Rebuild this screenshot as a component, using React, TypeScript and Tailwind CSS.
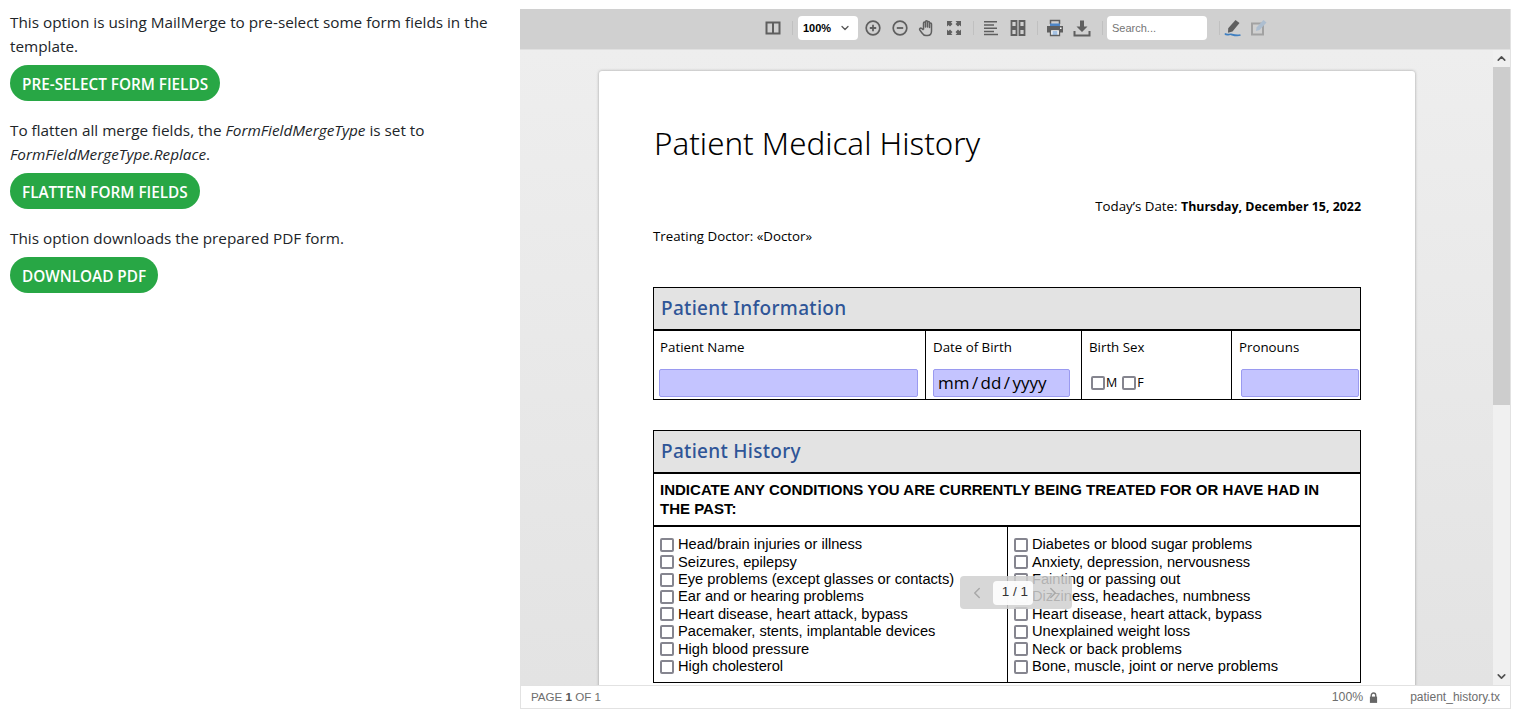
import { ChevronDown, ChevronLeft, ChevronRight, ChevronUp } from "lucide-react";

const leftConditions = [
  "Head/brain injuries or illness",
  "Seizures, epilepsy",
  "Eye problems (except glasses or contacts)",
  "Ear and or hearing problems",
  "Heart disease, heart attack, bypass",
  "Pacemaker, stents, implantable devices",
  "High blood pressure",
  "High cholesterol",
];

const rightConditions = [
  "Diabetes or blood sugar problems",
  "Anxiety, depression, nervousness",
  "Fainting or passing out",
  "Dizziness, headaches, numbness",
  "Heart disease, heart attack, bypass",
  "Unexplained weight loss",
  "Neck or back problems",
  "Bone, muscle, joint or nerve problems",
];

function GreenButton({ label }: { label: string }) {
  return (
    <button className="flex h-9 items-center rounded-full bg-[#28a745] px-3 pt-[2px] text-[15.300px] font-semibold text-white">
      {label}
    </button>
  );
}

function Sep() {
  return <div className="mx-[6px] h-[14px] w-px bg-[#c0c0c0]" />;
}

function IconBox({ children, className = "" }: { children: React.ReactNode; className?: string }) {
  return (
    <svg viewBox="0 0 18 18" className={`h-[18px] w-[18px] ${className}`} fill="none">
      {children}
    </svg>
  );
}

function Toolbar() {
  const gray = "#5f5f5f";
  return (
    <div className="flex h-[40px] shrink-0 items-center bg-[#d0d0d0] pb-[2px] pl-[244px]">
      <IconBox>
        <path d="M2.500 3.500h13v11h-13zM9 3.500v11" stroke={gray} strokeWidth="2" />
      </IconBox>
      <div className="w-[4px]" />
      <Sep />
      <div className="ml-[-1px] flex h-6 w-[60px] items-center justify-between rounded-sm bg-white pl-[5px] pr-[7px] font-['Liberation_Sans',sans-serif] text-[11px] font-bold text-black">
        <span>100%</span>
        <ChevronDown size={12} strokeWidth={2.5} className="text-[#555]" />
      </div>
      <IconBox className="ml-[6px]">
        <circle cx="9" cy="9" r="6.800" stroke={gray} strokeWidth="1.700" />
        <path d="M5.800 9h6.400M9 5.800v6.400" stroke={gray} strokeWidth="1.800" />
      </IconBox>
      <IconBox className="ml-[9px]">
        <circle cx="9" cy="9" r="6.800" stroke={gray} strokeWidth="1.700" />
        <path d="M5.800 9h6.400" stroke={gray} strokeWidth="1.800" />
      </IconBox>
      <IconBox className="ml-[9px]">
        <path
          d="M5.500 10.500V4a1 1 0 0 1 2 0v4V2.800a1 1 0 0 1 2 0V8V3.400a1 1 0 0 1 2 0v5V5a1 1 0 0 1 2 0v7c0 2.500-1.500 4.500-4 4.500H8c-2 0-3-1-4-2.500l-2.200-3c-.8-1.200.7-2.500 1.900-1.500l1.800 1.500"
          stroke={gray}
          strokeWidth="1.500"
          strokeLinejoin="round"
        />
      </IconBox>
      <IconBox className="ml-[9px]">
        <path
          d="M2 2h5.500L6 3.500 7.500 5 5 7.500 3.500 6 2 7.500zM16 2v5.500L14.500 6 13 7.500 10.500 5 12 3.500 10.500 2zM2 16v-5.500L3.500 12 5 10.500 7.500 13 6 14.500 7.500 16zM16 16h-5.500l1.500-1.500-1.500-1.500 2.500-2.500 1.500 1.500 1.500-1.500z"
          fill={gray}
        />
      </IconBox>
      <div className="w-[4px]" />
      <Sep />
      <IconBox className="ml-[2px]">
        <path d="M2 2.750h13M2 6h10M2 9.250h13M2 12.500h10M2 15.500h14" stroke={gray} strokeWidth="1.500" />
      </IconBox>
      <IconBox className="ml-[9px]">
        <path d="M2.500 2h5v6h-5zM10.500 2h5v6h-5zM2.500 10h5v6h-5zM10.500 10h5v6h-5z" stroke={gray} strokeWidth="1.800" />
      </IconBox>
      <div className="w-[4px]" />
      <Sep />
      <IconBox className="ml-[2px]">
        <path d="M4.500 5V1.500h9V5" stroke={gray} strokeWidth="1.500" />
        <path d="M4 4.500h10v2.500H4z" fill="#4f86c6" />
        <path d="M1 7h16v6.500H1z" fill={gray} />
        <path d="M14 8.500h1.500V10H14z" fill="#fff" />
        <path d="M4.500 10.500h9v6h-9z" fill="#fff" stroke={gray} strokeWidth="1.300" />
        <path d="M6.500 13h5M6.500 15h5" stroke="#4f86c6" strokeWidth="1.100" />
      </IconBox>
      <IconBox className="ml-[9px]">
        <path d="M7 1.500h4v6h3.500L9 13 3.500 7.500H7z" fill={gray} />
        <path d="M1.500 12v4.500h15V12" stroke={gray} strokeWidth="2" />
      </IconBox>
      <div className="w-[5px]" />
      <Sep />
      <div className="ml-[-2px] flex h-6 w-[100px] items-center rounded-sm bg-white pl-[5px] font-['Liberation_Sans',sans-serif] text-[11px] text-[#757575]">
        Search...
      </div>
      <div className="w-[6px]" />
      <Sep />
      <IconBox className="ml-[-2px]">
        <path d="M11.500 1l4 3-7 8.500-4.500 1.300.200-4.500z" fill={gray} />
        <path d="M1 14.500c1.500 2.500 4.500 .5 6 .8s5 2 9.500 .7" stroke="#3f7fc1" strokeWidth="1.700" />
      </IconBox>
      <IconBox className="ml-[8px] opacity-40">
        <path d="M2 4.500h11v11H2z" stroke={gray} strokeWidth="2" />
        <path d="M13.500 1l3 2.500-7 7.500-3.500 1 .5-3.500z" fill="#7aa5d2" />
      </IconBox>
    </div>
  );
}

function FormField({ className }: { className: string }) {
  return <div className={`h-[28px] rounded-[2px] border border-[#9a9af0] bg-[#c4c4ff] ${className}`} />;
}

function Box({ className = "" }: { className?: string }) {
  return <span className={`block h-[14px] w-[14px] shrink-0 rounded-[2px] border-2 border-[#85858f] bg-white ${className}`} />;
}

function ConditionList({ items, className }: { items: string[]; className: string }) {
  return (
    <div className={`pt-[9px] ${className}`}>
      {items.map((item) => (
        <div key={item} className="flex h-[17.430px] items-center gap-[4px] whitespace-nowrap">
          <Box />
          <span className="mt-[-1px]">{item}</span>
        </div>
      ))}
    </div>
  );
}

function SectionHead({ title }: { title: string }) {
  return (
    <div className="flex h-[43px] items-center border-b-2 border-black bg-[#e3e3e3] pl-[7px] font-['Noto_Sans',sans-serif] text-[19px] font-medium tracking-[0.3px] text-[#2f5597]">
      {title}
    </div>
  );
}

function Document() {
  return (
    <div className="ml-[79px] mt-[21px] w-[816px] rounded-t-[3px] bg-white px-[54px] pb-10 pt-[49px] shadow-[0_0_3px_rgba(0,0,0,0.35)]">
      <h1 className="h-[47px] pl-[1px] font-['Noto_Sans',sans-serif] text-[31.300px] font-light leading-[47px] text-black">
        Patient Medical History
      </h1>
      <p className="mt-[29px] text-right font-['Open_Sans',sans-serif] text-[13.300px] leading-[20px] text-black">
        Today’s Date: <b className="text-[12.400px]">Thursday, December 15, 2022</b>
      </p>
      <p className="mt-[9px] font-['Open_Sans',sans-serif] text-[13.300px] leading-[20px] text-black">Treating Doctor: «Doctor»</p>

      <div className="mt-[41px] w-[708px] border border-black">
        <SectionHead title="Patient Information" />
        <div className="flex h-[68px] font-['Open_Sans',sans-serif] text-[13.300px] text-black">
          <div className="w-[272px] border-r border-black pl-[6px] pt-[6px]">
            <div className="leading-[20px]">Patient Name</div>
            <FormField className="ml-[-1px] mt-[12px] w-[259px]" />
          </div>
          <div className="w-[156px] border-r border-black pl-[7px] pt-[6px]">
            <div className="leading-[20px]">Date of Birth</div>
            <div className="mt-[12px] flex h-[28px] w-[137px] items-center rounded-[2px] border border-[#9a9af0] bg-[#c4c4ff] pl-[4px] font-['Open_Sans',sans-serif] text-[17px] [word-spacing:-2px]">
              mm / dd / yyyy
            </div>
          </div>
          <div className="w-[150px] border-r border-black pl-[7px] pt-[6px]">
            <div className="leading-[20px]">Birth Sex</div>
            <div className="mt-[17px] flex items-center text-[12.500px]">
              <Box className="ml-[2px]" />
              <span className="ml-[1px]">M</span>
              <Box className="ml-[5px]" />
              <span className="ml-[1px]">F</span>
            </div>
          </div>
          <div className="flex-1 pl-[7px] pt-[6px]">
            <div className="leading-[20px]">Pronouns</div>
            <FormField className="ml-[2px] mt-[12px] w-[118px]" />
          </div>
        </div>
      </div>

      <div className="mt-[30px] w-[708px] border border-black">
        <SectionHead title="Patient History" />
        <div className="border-b-2 border-black pb-[7px] pl-[6px] pr-[30px] pt-[6px] font-['Liberation_Sans',sans-serif] text-[15.030px] font-bold leading-[19px] text-black">
          INDICATE ANY CONDITIONS YOU ARE CURRENTLY BEING TREATED FOR OR HAVE HAD IN THE PAST:
        </div>
        <div className="flex h-[155px] font-['Liberation_Sans',sans-serif] text-[14.670px] text-black">
          <ConditionList items={leftConditions} className="w-[354px] border-r border-black pl-[6px]" />
          <ConditionList items={rightConditions} className="flex-1 pl-[6px]" />
        </div>
      </div>
    </div>
  );
}

export default function App() {
  return (
    <div className="flex h-[718px] w-[1520px] overflow-hidden bg-white font-['Open_Sans',sans-serif] text-[15.300px] text-[#212529]">
      <div className="w-[520px] shrink-0 px-[10px] pt-[10px]">
        <p className="leading-6">This option is using MailMerge to pre-select some form fields in the template.</p>
        <div className="mt-[7px]"><GreenButton label="PRE-SELECT FORM FIELDS" /></div>
        <p className="mt-[17px] leading-6">
          To flatten all merge fields, the <i>FormFieldMergeType</i> is set to <i>FormFieldMergeType.Replace</i>.
        </p>
        <div className="mt-[7px]"><GreenButton label="FLATTEN FORM FIELDS" /></div>
        <p className="mt-[17px] leading-6">This option downloads the prepared PDF form.</p>
        <div className="mt-[7px]"><GreenButton label="DOWNLOAD PDF" /></div>
      </div>

      <div className="relative mt-[9px] flex h-[700px] w-[991px] flex-col border-b border-r border-[#e2e2e2]">
        <Toolbar />
        <div className="flex min-h-0 flex-1 border-t border-[#e0e0e0] bg-linear-to-b from-[#eeeeee] to-[#e3e3e3]">
          <div className="min-w-0 flex-1 overflow-hidden">
            <Document />
          </div>
          <div className="flex w-[17px] shrink-0 flex-col bg-[#f0f0f0]">
            <div className="flex h-[17px] items-center justify-center">
              <ChevronUp size={13} strokeWidth={3} className="text-[#505050]" />
            </div>
            <div className="h-[338px] bg-[#cdcdcd]" />
            <div className="flex-1" />
            <div className="flex h-[17px] items-center justify-center">
              <ChevronDown size={13} strokeWidth={3} className="text-[#505050]" />
            </div>
          </div>
        </div>
        <div className="flex h-[23px] shrink-0 items-center justify-between border-l border-t border-[#e2e2e2] bg-white pl-[10px] pr-[10px] font-['Liberation_Sans',sans-serif] text-[12px] text-[#6e6e6e]">
          <span className="text-[11.600px]">PAGE <b className="text-[#555]">1</b> OF 1</span>
          <div className="flex items-center">
            <span className="text-[12.300px]">100%</span>
            <svg viewBox="0 0 10 12" className="ml-[6px] h-[11px] w-[9px]" fill="#666">
              <path d="M1 5h8v7H1z" />
              <path d="M2.500 5.500V3.500a2.500 2.500 0 0 1 5 0v2" fill="none" stroke="#666" strokeWidth="1.500" />
            </svg>
            <span className="ml-[32px]">patient_history.tx</span>
          </div>
        </div>

        {/* floating page switcher */}
        <div className="absolute left-[440px] top-[567px] flex h-[33px] w-[112px] items-center rounded-[4px] bg-[#d0d0d0]/85">
          <ChevronLeft size={18} className="ml-[8px] text-[#a8a8a8]" />
          <div className="ml-[7px] flex h-6 w-[40px] items-center justify-center rounded-sm bg-white/90 pl-[4px] font-['Liberation_Sans',sans-serif] text-[13.500px] text-[#333]">
            1 / 1
          </div>
          <ChevronRight size={18} className="ml-[11px] text-[#a8a8a8]" />
        </div>
      </div>
    </div>
  );
}
